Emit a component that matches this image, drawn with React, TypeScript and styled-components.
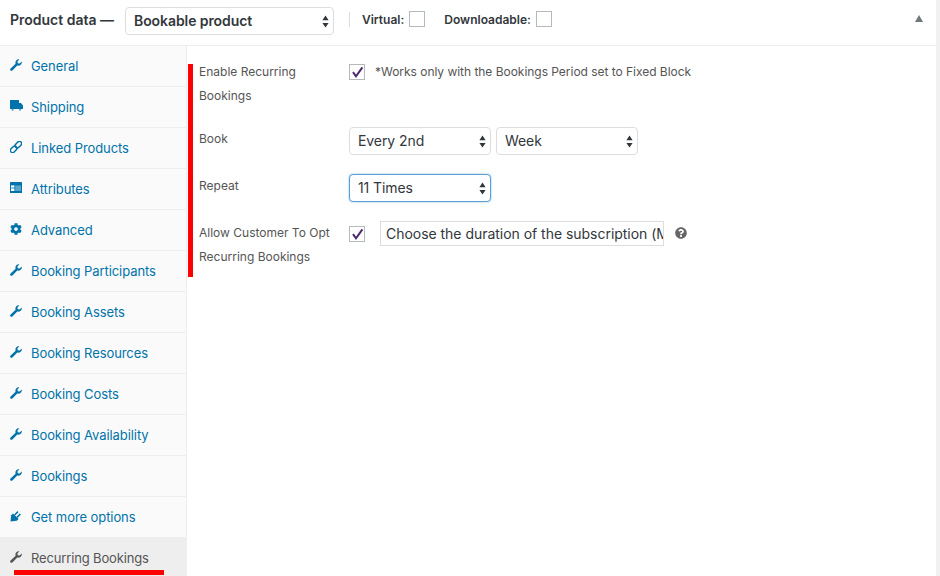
import styled, { createGlobalStyle } from 'styled-components';
import { FaCog, FaQuestionCircle } from 'react-icons/fa';
import type { ComponentType } from 'react';

const GlobalStyle = createGlobalStyle`
  html, body {
    margin: 0;
    padding: 0;
    background: #fff;
  }
  body {
    font-family: Inter, "Liberation Sans", sans-serif;
    overflow: hidden;
  }
`;

const WrenchIcon = () => (
  <svg viewBox="0 0 12 12" width="12" height="12" aria-hidden="true">
    <path
      fill="currentColor"
      d="M11.8 2.6 L9.6 4.6 L7.8 4.2 L7.4 2.4 L9.4 0.3 C7.4 -0.2 5.4 1.2 5.4 3.4 C5.4 3.9 5.5 4.4 5.6 4.7 L0.6 9.5 C-0.1 10.2 0 11 0.5 11.5 C1 12 1.8 12 2.4 11.4 L7.3 6.5 C9.6 7.2 12.2 5.2 11.8 2.6 Z"
    />
  </svg>
);

const TruckIcon = () => (
  <svg viewBox="0 0 13 11" width="13" height="11" aria-hidden="true">
    <path fill="currentColor" d="M0 0 H9 V3 H11 L13 5.5 V9 H0 Z" />
    <circle cx="2.6" cy="9.8" r="1.1" fill="currentColor" opacity="0.6" />
    <circle cx="10" cy="9.8" r="1.1" fill="currentColor" opacity="0.6" />
  </svg>
);

const LinkIcon = () => (
  <svg viewBox="0 0 12 12" width="12" height="12" aria-hidden="true">
    <g transform="rotate(-45 6 6)" fill="none" stroke="currentColor" strokeWidth="1.5">
      <rect x="-1" y="3.8" width="7.4" height="4.4" rx="2.2" />
      <rect x="5.6" y="3.8" width="7.4" height="4.4" rx="2.2" />
    </g>
  </svg>
);

const AttributesIcon = () => (
  <svg viewBox="0 0 12 11" width="12" height="11" aria-hidden="true">
    <rect width="12" height="11" rx="0.6" fill="currentColor" />
    <rect x="1" y="3.4" width="3.4" height="2.2" fill="#fff" />
    <rect x="1" y="6.4" width="3.4" height="2.6" fill="#fff" />
    <rect x="5.2" y="3.4" width="5.8" height="5.6" fill="#fff" opacity="0.35" />
  </svg>
);

const PlugIcon = () => (
  <svg viewBox="0 0 12 12" width="12" height="12" aria-hidden="true">
    <path fill="currentColor" d="M0.5 11.5 L1.2 5.2 L3 3.4 L8.6 9 L6.8 10.8 Z" />
    <path d="M4.6 5 L8 1.6 M7 7.4 L10.4 4" fill="none" stroke="currentColor" strokeWidth="1.5" />
  </svg>
);

type Tab = { label: string; icon: ComponentType };

const tabs: Tab[] = [
  { label: 'General', icon: WrenchIcon },
  { label: 'Shipping', icon: TruckIcon },
  { label: 'Linked Products', icon: LinkIcon },
  { label: 'Attributes', icon: AttributesIcon },
  { label: 'Advanced', icon: FaCog },
  { label: 'Booking Participants', icon: WrenchIcon },
  { label: 'Booking Assets', icon: WrenchIcon },
  { label: 'Booking Resources', icon: WrenchIcon },
  { label: 'Booking Costs', icon: WrenchIcon },
  { label: 'Booking Availability', icon: WrenchIcon },
  { label: 'Bookings', icon: WrenchIcon },
  { label: 'Get more options', icon: PlugIcon },
  { label: 'Recurring Bookings', icon: WrenchIcon },
];

const Spinner = () => (
  <SpinnerIcon viewBox="0 0 7 13" aria-hidden="true">
    <path d="M3.5 0.5 L6.6 5.2 L0.4 5.2 Z M0.4 8 L6.6 8 L3.5 12.6 Z" fill="#32373c" />
  </SpinnerIcon>
);

const Check = () => (
  <svg viewBox="0 0 14 14" width="14" height="14" aria-hidden="true">
    <path d="M3 7.2 L6 11.4 L12.4 2.4" fill="none" stroke="#4b2a6e" strokeWidth="2" />
  </svg>
);

export default function App() {
  return (
    <>
      <GlobalStyle />
      <Page>
        <Panel>
          <Header>
            <Title>Product data —</Title>
            <TypeSelect>
              <span>Bookable product</span>
              <Spinner />
            </TypeSelect>
            <Divider />
            <HeaderOption>
              Virtual:
              <CheckBox />
            </HeaderOption>
            <HeaderOption>
              Downloadable:
              <CheckBox />
            </HeaderOption>
            <Collapse />
          </Header>
          <Body>
            <Sidebar>
              {tabs.map((tab, i) => {
                const Icon = tab.icon;
                const active = i === tabs.length - 1;
                return (
                  <TabItem key={tab.label} $active={active}>
                    <TabIcon>
                      <Icon />
                    </TabIcon>
                    {tab.label}
                  </TabItem>
                );
              })}
              <TabMark />
            </Sidebar>
            <Content>
              <SideMark />
              <Row>
                <FieldLabel>Enable Recurring Bookings</FieldLabel>
                <Controls>
                  <CheckBox>
                    <Check />
                  </CheckBox>
                  <Note>*Works only with the Bookings Period set to Fixed Block</Note>
                </Controls>
              </Row>
              <Row>
                <FieldLabel>Book</FieldLabel>
                <Controls $gap={5}>
                  <FieldSelect>
                    <span>Every 2nd</span>
                    <Spinner />
                  </FieldSelect>
                  <FieldSelect>
                    <span>Week</span>
                    <Spinner />
                  </FieldSelect>
                </Controls>
              </Row>
              <Row>
                <FieldLabel>Repeat</FieldLabel>
                <Controls>
                  <FieldSelect $focused>
                    <span>11 Times</span>
                    <Spinner />
                  </FieldSelect>
                </Controls>
              </Row>
              <Row>
                <FieldLabel>Allow Customer To Opt Recurring Bookings</FieldLabel>
                <Controls $gap={15}>
                  <CheckBox>
                    <Check />
                  </CheckBox>
                  <TextField>Choose the duration of the subscription (Maximum)</TextField>
                  <HelpIcon>
                    <FaQuestionCircle />
                  </HelpIcon>
                </Controls>
              </Row>
            </Content>
          </Body>
        </Panel>
        <Gutter />
      </Page>
    </>
  );
}

const Page = styled.div`
  display: flex;
  width: 940px;
  height: 576px;
  overflow: hidden;
`;

const Panel = styled.div`
  width: 936px;
  display: flex;
  flex-direction: column;
`;

const Gutter = styled.div`
  width: 4px;
  background: #f1f1f1;
`;

const Header = styled.div`
  height: 45px;
  flex: none;
  display: flex;
  align-items: center;
  padding: 0 10px;
  border-bottom: 1px solid #eee;
  color: #32373c;
  position: relative;
`;

const Title = styled.div`
  font-size: 14px;
  font-weight: 600;
  width: 115px;
  margin-top: -7px;
`;

const selectBase = `
  display: flex;
  align-items: center;
  justify-content: space-between;
  box-sizing: border-box;
  height: 28px;
  background: #fff;
  border-radius: 4px;
  color: #32373c;
  font-size: 14px;
  letter-spacing: -0.08px;
  span {
    margin-top: -1px;
  }
`;

const TypeSelect = styled.div`
  ${selectBase}
  width: 209px;
  margin-top: -3px;
  padding: 0 4px 0 8px;
  border: 1px solid #ddd;
  font-weight: 600;
`;

const SpinnerIcon = styled.svg`
  width: 7px;
  height: 13px;
  flex: none;
`;

const Divider = styled.div`
  width: 1px;
  height: 15px;
  background: #ddd;
  margin: -6px 12px 0 15px;
`;

const HeaderOption = styled.div`
  display: flex;
  align-items: center;
  gap: 5px;
  font-size: 12px;
  font-weight: 600;
  margin-right: 19px;
  margin-top: -7px;
`;

const CheckBox = styled.div`
  width: 16px;
  height: 16px;
  box-sizing: border-box;
  flex: none;
  display: flex;
  background: #fff;
  border: 1px solid #b4b9be;
`;

const Collapse = styled.div`
  position: absolute;
  right: 13px;
  top: 15px;
  width: 0;
  height: 0;
  border-left: 4px solid transparent;
  border-right: 4px solid transparent;
  border-bottom: 7px solid #72777c;
`;

const Body = styled.div`
  flex: 1;
  display: flex;
  min-height: 0;
`;

const Sidebar = styled.div`
  width: 187px;
  flex: none;
  box-sizing: border-box;
  background: #fafafa;
  border-right: 1px solid #eee;
  position: relative;
`;

const TabItem = styled.div<{ $active?: boolean }>`
  height: 41px;
  box-sizing: border-box;
  display: flex;
  align-items: center;
  padding: 0 0 0 10px;
  font-size: 13px;
  letter-spacing: ${(p) => (p.$active ? '-0.15px' : '-0.08px')};
  color: ${(p) => (p.$active ? '#555' : '#0073aa')};
  background: ${(p) => (p.$active ? '#eee' : 'transparent')};
  border-bottom: 1px solid #eee;
`;

const TabIcon = styled.span`
  width: 21px;
  flex: none;
  display: flex;
  font-size: 12px;
  margin-top: -3px;
`;

const TabMark = styled.div`
  position: absolute;
  left: 14px;
  top: 524px;
  width: 150px;
  height: 5px;
  background: #f00;
`;

const Content = styled.div`
  flex: 1;
  position: relative;
  padding: 14px 0 0 12px;
`;

const SideMark = styled.div`
  position: absolute;
  left: 1px;
  top: 18px;
  width: 5px;
  height: 213px;
  background: #f00;
`;

const Row = styled.div`
  display: flex;
  align-items: flex-start;
  margin-bottom: 19px;
`;

const FieldLabel = styled.div`
  width: 150px;
  flex: none;
  font-size: 12px;
  line-height: 24px;
  color: #555;
`;

const Controls = styled.div<{ $gap?: number }>`
  display: flex;
  align-items: center;
  gap: ${(p) => p.$gap ?? 10}px;
  min-height: 24px;
`;

const Note = styled.span`
  font-size: 12px;
  letter-spacing: -0.03px;
  color: #555;
  margin-top: -1px;
`;

const FieldSelect = styled.div<{ $focused?: boolean }>`
  ${selectBase}
  width: 142px;
  padding: 0 4px 0 8px;
  border: 1px solid ${(p) => (p.$focused ? '#5b9dd9' : '#ddd')};
  box-shadow: ${(p) => (p.$focused ? '0 0 2px rgba(30, 140, 190, 0.6)' : 'none')};
`;

const TextField = styled.div`
  width: 284px;
  height: 25px;
  box-sizing: border-box;
  padding: 0 5px;
  border: 1px solid #ddd;
  background: #fff;
  color: #32373c;
  font-size: 14px;
  letter-spacing: -0.03px;
  line-height: 23px;
  white-space: nowrap;
  overflow: hidden;
`;

const HelpIcon = styled.span`
  display: flex;
  font-size: 12px;
  color: #666;
  margin-left: -4px;
  margin-top: -2px;
`;
